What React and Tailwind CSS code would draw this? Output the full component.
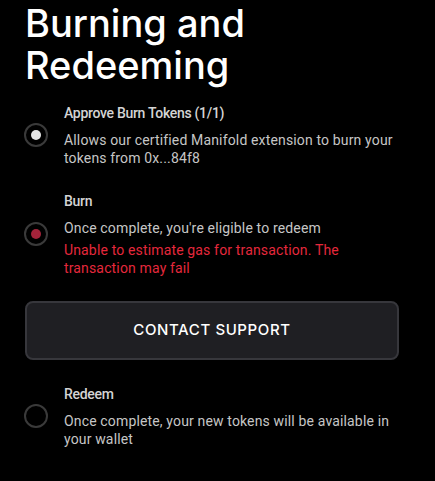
const steps = [
  {
    title: "Approve Burn Tokens (1/1)",
    desc: "Allows our certified Manifold extension to burn your tokens from 0x...84f8",
    state: "done",
  },
  {
    title: "Burn",
    desc: "Once complete, you're eligible to redeem",
    error: "Unable to estimate gas for transaction. The transaction may fail",
    state: "error",
  },
  {
    title: "Redeem",
    desc: "Once complete, your new tokens will be available in your wallet",
    state: "idle",
  },
];

function StepDot({ state }) {
  return (
    <div className="flex h-6 w-6 shrink-0 items-center justify-center rounded-full border-2 border-[#3a3a3a]">
      {state === "done" && <div className="h-[10px] w-[10px] rounded-full bg-[#e6e6e6]" />}
      {state === "error" && <div className="h-[10px] w-[10px] rounded-full bg-[#a3233a]" />}
    </div>
  );
}

function Step({ step }) {
  return (
    <div className="flex items-center gap-4">
      <StepDot state={step.state} />
      <div className="w-[335px] font-['Roboto',sans-serif]">
        <div className="text-sm font-medium leading-5 tracking-[-0.3px] text-[#d4d4d4]">{step.title}</div>
        <p className="mt-2 text-sm leading-[18px] tracking-[0.15px] text-[#c6c6c6]">{step.desc}</p>
        {step.error && (
          <p className="mt-1 text-sm leading-[18px] tracking-[0.15px] text-[#e5283c]">{step.error}</p>
        )}
      </div>
    </div>
  );
}

export default function App() {
  return (
    <div className="min-h-screen bg-black pl-6 font-['Inter',sans-serif] text-white">
      <h1 className="ml-px pt-[2px] text-[38px] font-medium leading-[42px]">
        Burning and
        <br />
        Redeeming
      </h1>
      <div className="mt-[17px] flex w-[375px] flex-col gap-6">
        <Step step={steps[0]} />
        <Step step={steps[1]} />
        <button className="ml-px h-[59px] w-[374px] rounded-lg border-2 border-[#37373c] bg-[#1f1f23] text-[15px] font-medium tracking-[0.6px] text-white">
          CONTACT SUPPORT
        </button>
        <Step step={steps[2]} />
      </div>
    </div>
  );
}
